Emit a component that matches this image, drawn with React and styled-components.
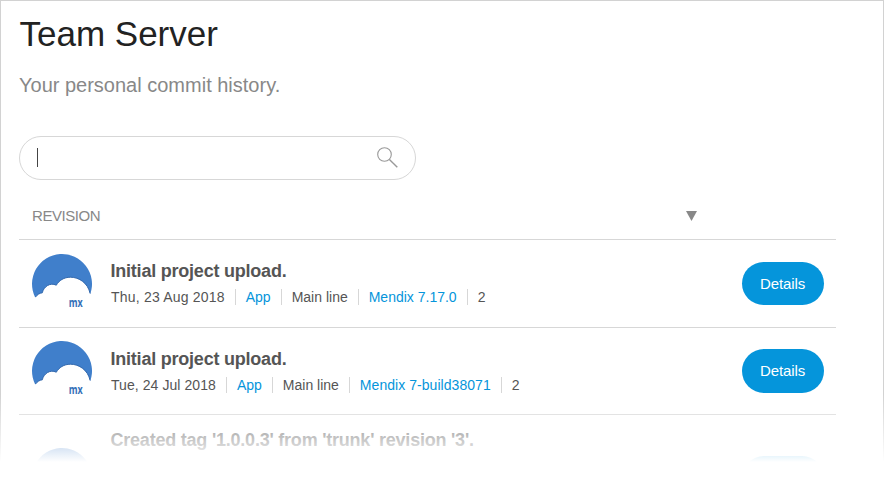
import React from "react";
import styled, { createGlobalStyle } from "styled-components";

const GlobalStyle = createGlobalStyle`
  * { box-sizing: border-box; }
  body {
    margin: 0;
    background: #fff;
    font-family: "Liberation Sans", Arial, sans-serif;
    color: #555;
  }
`;

const Viewport = styled.div`
  position: relative;
  width: 884px;
  height: 492px;
  overflow: hidden;
`;

const Page = styled.main`
  height: 492px;
  padding: 13px 47px 0 18px;
  border: 1px solid #d2d2d2;
  border-bottom: 0;
`;

const Fade = styled.div`
  position: absolute;
  inset: 394px 0 0;
  background: linear-gradient(rgba(255, 255, 255, 0), #fff 68px);
`;

const Heading = styled.h1`
  margin: 0;
  padding-left: 0.5px;
  font-size: 35px;
  line-height: 40px;
  font-weight: 400;
  color: #222;
`;

const Subtitle = styled.p`
  margin: 19px 0 0;
  font-size: 20px;
  line-height: 24px;
  color: #888;
`;

const SearchBox = styled.label`
  display: flex;
  align-items: center;
  justify-content: space-between;
  width: 397px;
  height: 44px;
  margin-top: 39px;
  padding: 0 17px 0 18px;
  border: 1px solid #d7d7d7;
  border-radius: 22px;
`;

const Caret = styled.span`
  width: 1px;
  height: 19px;
  margin: 0 0 2px -1px;
  background: #444;
`;

const SearchIcon = styled.svg`
  width: 21px;
  height: 21px;
  margin-bottom: 1px;
  fill: none;
  stroke: #999;
`;

const Table = styled.section`
  width: 817px;
`;

const TableHeader = styled.header`
  display: flex;
  align-items: center;
  justify-content: space-between;
  height: 60px;
  padding: 12px 139px 0 13px;
  border-bottom: 1px solid #d7d7d7;
  font-size: 15px;
  color: #888;
`;

const HeaderLabel = styled.span`
  letter-spacing: -0.45px;
`;

const SortArrow = styled.svg`
  width: 11px;
  height: 10px;
  fill: #888;
`;

const Row = styled.article`
  display: flex;
  align-items: flex-start;
  height: ${(p) => p.$height}px;
  padding: 0 12px 0 13px;
  border-bottom: 1px solid #d7d7d7;
`;

const Logo = styled.svg`
  flex: none;
  width: 60px;
  height: 60px;
  margin-top: ${(p) => p.$top}px;
`;

const LogoText = styled.text`
  font: bold 12.5px "Open Sans", sans-serif;
  fill: #3470b8;
`;

const Commit = styled.div`
  flex: 1;
  padding-top: ${(p) => p.$top}px;
  margin-left: 19px;
`;

const CommitTitle = styled.h2`
  margin: 0 0 0 -0.5px;
  font-size: 18px;
  line-height: 22px;
  font-weight: 700;
  letter-spacing: -0.22px;
  white-space: nowrap;
`;

const Meta = styled.div`
  display: flex;
  margin-top: 7px;
  font-size: 14px;
  line-height: 16px;
  white-space: nowrap;
`;

const MetaItem = styled.span`
  padding: 0 10px;
  letter-spacing: ${(p) => p.$spacing ?? 0}px;
  color: ${(p) => (p.$link ? "#0595db" : "#555")};
  & + & { border-left: 1px solid #d7d7d7; }
  &:first-child { padding-left: 0; }
`;

const DetailsButton = styled.button`
  flex: none;
  width: 82px;
  height: ${(p) => p.$height}px;
  margin-top: ${(p) => p.$top}px;
  padding: 0 1px 1px 0;
  border: 0;
  border-radius: 22px;
  background: #0595db;
  color: #fff;
  font: 15px "Liberation Sans", Arial, sans-serif;
  letter-spacing: -0.1px;
`;

const commits = [
  {
    title: "Initial project upload.", height: 88, logoTop: 14, textTop: 20, buttonTop: 22, buttonHeight: 43,
    meta: [["Thu, 23 Aug 2018", false, 0.2], ["App", true], ["Main line", false], ["Mendix 7.17.0", true], ["2", false]],
  },
  {
    title: "Initial project upload.", height: 87, logoTop: 13, textTop: 20, buttonTop: 21, buttonHeight: 44,
    meta: [["Tue, 24 Jul 2018", false, 0.07], ["App", true], ["Main line", false], ["Mendix 7-build38071", true, 0.05], ["2", false]],
  },
  {
    title: "Created tag '1.0.0.3' from 'trunk' revision '3'.", height: 77, logoTop: 33, textTop: 14, buttonTop: 41, buttonHeight: 44,
    meta: [], plain: true,
  },
];

function MendixLogo({ top, plain }) {
  return (
    <Logo $top={top} viewBox="0 0 60 60" role="img" aria-label="Mendix">
      <path
        fill="#407fcb"
        d="M3.2 43.5A30 30 0 1 1 58.3 40C56 29 47 23.2 38.5 23.2C32 23.2 27 26.5 24.3 31.2C18 28 11.5 33 10.3 38.8C7.5 39 5 41 3.2 43.5Z"
      />
      <path
        fill="none"
        stroke="#3268ad"
        strokeWidth="1"
        d="M3.5 43C5 41 7.5 39 10.3 38.8C11.5 33 18 28 24.3 31.2C27 26.5 32 23.2 38.5 23.2C47 23.2 56 29 58.1 39.5"
      />
      {!plain && <LogoText x="36.8" y="52.6" textLength="14" lengthAdjust="spacingAndGlyphs">mx</LogoText>}
    </Logo>
  );
}

export default function App() {
  return (
    <>
      <GlobalStyle />
      <Viewport>
        <Page>
          <Heading>Team Server</Heading>
          <Subtitle>Your personal commit history.</Subtitle>
          <SearchBox>
            <Caret />
            <SearchIcon viewBox="0 0 21 21">
              <circle cx="7.5" cy="7.5" r="6.8" strokeWidth="1.1" />
              <path d="M12.4 12.4L20.3 20.3" strokeWidth="1.4" />
            </SearchIcon>
          </SearchBox>
          <Table>
            <TableHeader>
              <HeaderLabel>REVISION</HeaderLabel>
              <SortArrow viewBox="0 0 11 10"><path d="M0 0H11L5.5 10Z" /></SortArrow>
            </TableHeader>
            {commits.map((commit, i) => (
              <Row key={i} $height={commit.height}>
                <MendixLogo top={commit.logoTop} plain={commit.plain} />
                <Commit $top={commit.textTop}>
                  <CommitTitle>{commit.title}</CommitTitle>
                  <Meta>
                    {commit.meta.map(([text, link, spacing]) => (
                      <MetaItem key={text} $link={link} $spacing={spacing}>{text}</MetaItem>
                    ))}
                  </Meta>
                </Commit>
                <DetailsButton $top={commit.buttonTop} $height={commit.buttonHeight}>
                  {commit.plain ? null : "Details"}
                </DetailsButton>
              </Row>
            ))}
          </Table>
        </Page>
        <Fade />
      </Viewport>
    </>
  );
}
